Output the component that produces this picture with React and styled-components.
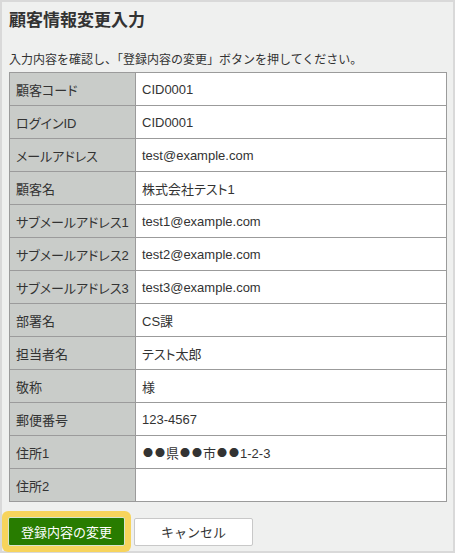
import React from "react";
import styled, { createGlobalStyle } from "styled-components";

const GlobalStyle = createGlobalStyle`
  html, body {
    margin: 0;
    padding: 0;
    background: #ffffff;
  }
  body {
    font-family: "Liberation Sans", "Noto Sans CJK JP", sans-serif;
    color: #333333;
  }
`;

const Panel = styled.div`
  box-sizing: border-box;
  width: 455px;
  height: 553px;
  margin: 0;
  padding: 0 6px 0 7px;
  background: #eff0ef;
  border: 2px solid #d9d9d9;
`;

const Title = styled.h1`
  margin: 0;
  padding: 5px 0 0 0;
  font-size: 17px;
  line-height: 24px;
  font-weight: bold;
  color: #333;
  font-family: "Noto Sans CJK JP", sans-serif;
`;

const Lead = styled.p`
  margin: 20px 0 0 0;
  font-size: 12px;
  line-height: 18px;
  color: #333;
`;

const Table = styled.table`
  margin-top: 3px;
  width: 438px;
  border-collapse: collapse;
  font-size: 13px;
  font-feature-settings: "palt";
`;

const Row = styled.tr`
  height: 33px;
`;

const Label = styled.th`
  width: 113px;
  padding: 0 6px;
  text-align: left;
  font-weight: normal;
  background: #c9ccc9;
  border: 1px solid #9b9b9b;
  color: #333;
  white-space: nowrap;
`;

const Value = styled.td`
  padding: 0 6px;
  background: #ffffff;
  border: 1px solid #9b9b9b;
  color: #333;
`;

const Dot = styled.span`
  display: inline-block;
  width: 12px;
  text-align: center;
  font-family: "Noto Sans CJK JP", sans-serif;
  font-feature-settings: normal;
  font-size: 10px;
  vertical-align: 1px;
`;

const Actions = styled.div`
  display: flex;
  align-items: center;
  gap: 9px;
  margin-top: 15px;
`;

const Button = styled.button`
  box-sizing: border-box;
  height: ${(p) => (p.$primary ? "29px" : "28px")};
  width: ${(p) => (p.$primary ? "117px" : "119px")};
  font-family: "Noto Sans CJK JP", sans-serif;
  font-size: 13px;
  padding: 0;
  cursor: pointer;
  border-radius: 2px;
  color: ${(p) => (p.$primary ? "#ffffff" : "#333333")};
  background: ${(p) => (p.$primary ? "#287c00" : "#ffffff")};
  border: 1px solid ${(p) => (p.$primary ? "#d8e4cf" : "#c8c8c8")};
  box-shadow: ${(p) => (p.$primary ? "0 0 0 6px #f7d45c" : "none")};
  margin-left: ${(p) => (p.$primary ? "-1px" : "0")};
`;

const rows = [
  ["顧客コード", "CID0001"],
  ["ログインID", "CID0001"],
  ["メールアドレス", "test@example.com"],
  ["顧客名", "株式会社テスト1"],
  ["サブメールアドレス1", "test1@example.com"],
  ["サブメールアドレス2", "test2@example.com"],
  ["サブメールアドレス3", "test3@example.com"],
  ["部署名", "CS課"],
  ["担当者名", "テスト太郎"],
  ["敬称", "様"],
  ["郵便番号", "123-4567"],
  ["住所1", "●●県●●市●●1-2-3"],
  ["住所2", ""],
];

// ● comes out tiny in Liberation Sans, so give it the CJK face
const renderValue = (text) =>
  text.split(/(●)/).map((part, i) =>
    part === "●" ? <Dot key={i}>●</Dot> : part
  );

export default function App() {
  return (
    <>
      <GlobalStyle />
      <Panel>
        <Title>顧客情報変更入力</Title>
        <Lead>入力内容を確認し、「登録内容の変更」ボタンを押してください。</Lead>
        <Table>
          <tbody>
            {rows.map(([label, value]) => (
              <Row key={label}>
                <Label>{label}</Label>
                <Value>{renderValue(value)}</Value>
              </Row>
            ))}
          </tbody>
        </Table>
        <Actions>
          <Button $primary>登録内容の変更</Button>
          <Button>キャンセル</Button>
        </Actions>
      </Panel>
    </>
  );
}
